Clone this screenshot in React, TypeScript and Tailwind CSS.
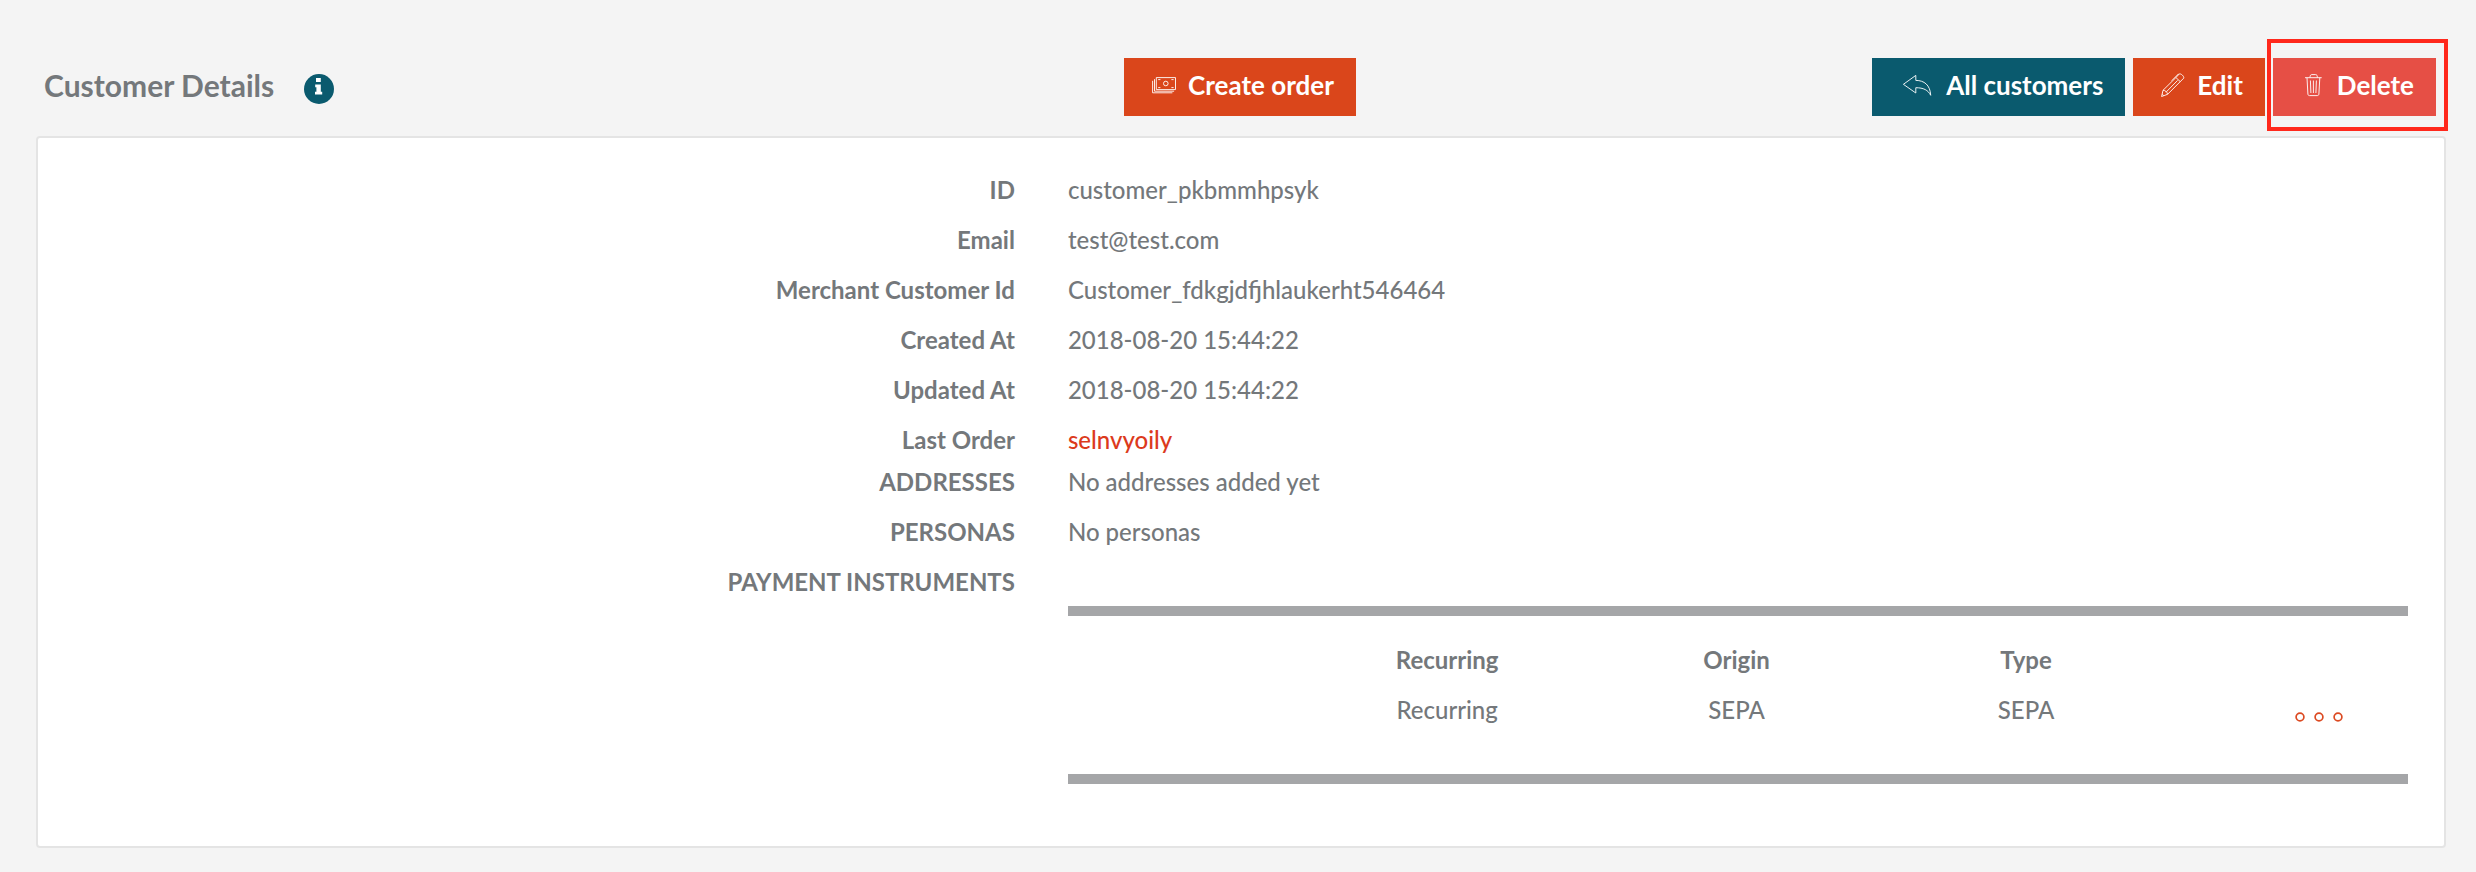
import type { ReactNode } from "react";

type IconProps = { children: ReactNode; wide?: boolean };

function StrokeIcon({ children, wide = false }: IconProps) {
  return (
    <svg
      aria-hidden="true"
      viewBox={wide ? "0 0 34 24" : "0 0 24 24"}
      className={wide ? "h-6 w-[34px] shrink-0" : "h-6 w-6 shrink-0"}
      fill="none"
      stroke="currentColor"
      strokeWidth="0.9"
      strokeLinejoin="round"
    >
      {children}
    </svg>
  );
}

function MoneyIcon() {
  return (
    <StrokeIcon>
      <rect x="4.3" y="4.6" width="19.2" height="12" />
      <circle cx="13.8" cy="10.5" r="2.3" />
      <path d="M6.2 6.6h2.2M19.4 6.6h2.2M6.2 14.6h2.2M19.4 14.6h2.2M2.5 6.2v12h19.6M.6 7.8v12h19.8" />
    </StrokeIcon>
  );
}

function ReplyIcon() {
  return (
    <StrokeIcon wide>
      <path d="M3.4 11.3 15.8 2.4v5c8.4 0 14.4 4.6 14.9 14.9-2.6-5.2-7.2-7.6-14.9-7.6v5.3Z" />
    </StrokeIcon>
  );
}

function PenIcon() {
  return (
    <StrokeIcon>
      <path d="M18.2 1c1.4-.9 5.2 2.3 4.5 4.2L6.6 21.3l-6 2.2 1.4-6.2L14.900 4.600Z" />
      <path d="M15 4.600 19.200 8.600M2 17.300c1.900-.2 4.300 1.700 4.600 4M5 19.200 16.600 7.400M10.700 7.700l7-7M1.200 21l1.600 1.600" />
    </StrokeIcon>
  );
}

function TrashIcon() {
  return (
    <StrokeIcon>
      <path d="M4 4.700h16.700M9 4.600c.1-2.200.6-3 1.800-3h3.800c1.200 0 1.700.8 1.800 3M6 4.800l.9 16.200c.1 1 .6 1.600 1.600 1.600h7.800c1 0 1.500-.6 1.600-1.600l.9-16.200M9.400 7.500l.5 12.500M12.400 7.500v12.500M15.400 7.500l-.5 12.500" />
    </StrokeIcon>
  );
}

function InfoIcon() {
  return (
    <svg aria-hidden="true" viewBox="0 0 30 30" className="size-[30px]">
      <circle cx="15" cy="15" r="15" fill="#0a5a6e" />
      <path fill="#fff" d="M12 4h4.800v4H12zM11.200 10.600h5.600v7.200h1.400v2.600h-7.200v-2.600h1.400v-4.600h-1.200z" />
    </svg>
  );
}

const tones = {
  orange: "bg-[#da461b]",
  teal: "bg-[#0a5a6e]",
  red: "bg-[#e64f45]",
};

function ActionButton({ tone, icon, label }: { tone: keyof typeof tones; icon: ReactNode; label: string }) {
  return (
    <button
      type="button"
      className={`flex h-[58px] items-center gap-3 pr-[22px] pb-1 pl-7 text-[26px] leading-8 font-bold text-white ${tones[tone]}`}
    >
      {icon}
      {label}
    </button>
  );
}

type Detail = { label: string; value: ReactNode; tight?: boolean };

const details: Detail[] = [
  { label: "ID", value: "customer_pkbmmhpsyk" },
  { label: "Email", value: "test@test.com" },
  { label: "Merchant Customer Id", value: "Customer_fdkgjdfjhlaukerht546464" },
  { label: "Created At", value: "2018-08-20 15:44:22" },
  { label: "Updated At", value: "2018-08-20 15:44:22" },
  {
    label: "Last Order",
    value: (
      <a href="#order" className="text-[#dc3a1c]">
        selnvyoily
      </a>
    ),
    tight: true,
  },
  { label: "ADDRESSES", value: "No addresses added yet" },
  { label: "PERSONAS", value: "No personas" },
];

const instruments = [{ recurring: "Recurring", origin: "SEPA", type: "SEPA" }];

function InstrumentTable() {
  return (
    <div className="mt-[49px] border-y-10 border-[#a5a6a8] pt-[19px] pb-[39px]">
      <table className="w-full table-fixed text-center">
        <colgroup>
          <col className="w-[17.5%]" />
          <col className="w-[21.6%]" />
          <col className="w-[21.6%]" />
          <col className="w-[21.6%]" />
          <col />
        </colgroup>
        <thead>
          <tr className="h-[50px]">
            <td />
            <th scope="col">Recurring</th>
            <th scope="col">Origin</th>
            <th scope="col">Type</th>
            <td />
          </tr>
        </thead>
        <tbody>
          {instruments.map((item) => (
            <tr key={item.recurring} className="h-[50px] font-medium">
              <td />
              <td>{item.recurring}</td>
              <td>{item.origin}</td>
              <td>{item.type}</td>
              <td className="pr-[65px]">
                <button type="button" aria-label="More actions" className="ml-auto flex pt-3.5">
                  <svg aria-hidden="true" viewBox="0 0 48 10" className="h-[10px] w-12" fill="none" stroke="#dc4a22" strokeWidth="1.7">
                    <circle cx="5" cy="5" r="3.9" />
                    <circle cx="24" cy="5" r="3.9" />
                    <circle cx="43" cy="5" r="3.9" />
                  </svg>
                </button>
              </td>
            </tr>
          ))}
        </tbody>
      </table>
    </div>
  );
}

export default function App() {
  return (
    <main className="min-h-screen bg-[#f4f4f4] pt-[58px] pr-[30px] pb-6 pl-9 font-['Lato','Liberation_Sans',sans-serif] text-2xl text-[#74787b]">
      <header className="mb-5 grid grid-cols-[1fr_auto_1fr] items-center pr-[10px] pl-2">
        <div className="flex items-center gap-[30px]">
          <h1 className="pb-1 text-[30px] leading-9 font-bold">Customer Details</h1>
          <button type="button" aria-label="Information" className="pt-1">
            <InfoIcon />
          </button>
        </div>
        <ActionButton tone="orange" icon={<MoneyIcon />} label="Create order" />
        <div className="flex justify-end gap-2">
          <ActionButton tone="teal" icon={<ReplyIcon />} label="All customers" />
          <ActionButton tone="orange" icon={<PenIcon />} label="Edit" />
          <div className="relative">
            <ActionButton tone="red" icon={<TrashIcon />} label="Delete" />
            <span className="pointer-events-none absolute -top-[19px] -right-3 -bottom-[15px] -left-1.5 border-4 border-[#ff281c]" />
          </div>
        </div>
      </header>

      <section className="rounded border-2 border-[#e4e4e4] bg-white px-9 pt-[27px] pb-[62px]">
        <dl>
          {details.map((item) => (
            <div
              key={item.label}
              className={`grid grid-cols-[33fr_47fr] gap-x-[53px] leading-[50px] ${item.tight ? "h-[42px]" : "h-[50px]"}`}
            >
              <dt className="text-right font-bold">{item.label}</dt>
              <dd className="font-medium">{item.value}</dd>
            </div>
          ))}
          <div className="grid grid-cols-[33fr_47fr] gap-x-[53px]">
            <dt className="text-right leading-[50px] font-bold">PAYMENT INSTRUMENTS</dt>
            <dd>
              <InstrumentTable />
            </dd>
          </div>
        </dl>
      </section>
    </main>
  );
}
